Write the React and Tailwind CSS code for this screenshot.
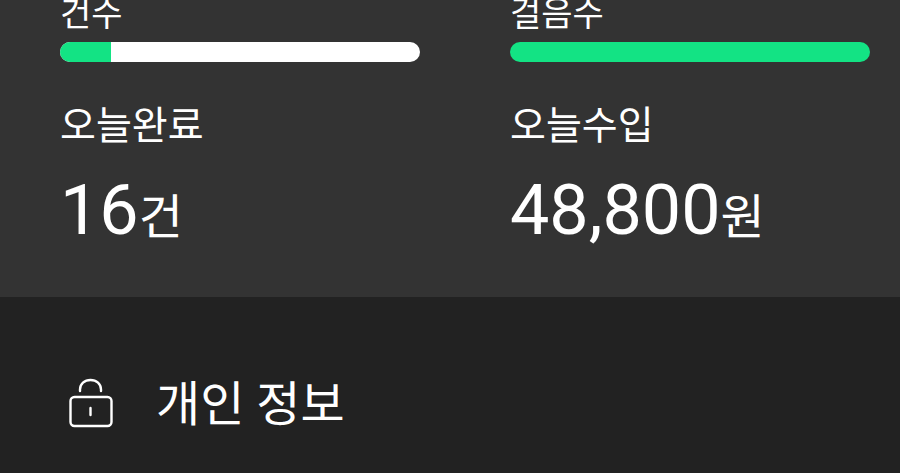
const FONT = "font-['Roboto','Noto_Sans_CJK_KR',sans-serif]";

const LockIcon = () => (
  <svg width="44" height="50" viewBox="0 0 44 50" fill="none" stroke="white" strokeWidth="2.4" strokeLinecap="round" className="shrink-0">
    <path d="M11 13 V11.5 C11 6 15.5 2 21.5 2 C27.5 2 32 6 32 11.5 V13" />
    <rect x="1.5" y="19" width="41" height="29" rx="4" />
    <path d="M21.5 30 V37" />
  </svg>
);

const Stat = ({ label, progress, title, value, unit }) => (
  <div className="flex flex-col">
    <div className="text-[34px] leading-[52px] text-white">{label}</div>
    <div className="mt-[2px] h-5 w-[360px] overflow-hidden rounded-[10px] bg-white">
      <div className="h-full bg-[#13e384]" style={{ width: `${progress}%` }} />
    </div>
    <div className="mt-[38px] text-[39px] leading-[52px] text-white">{title}</div>
    <div className="mt-[20px] flex items-baseline text-white">
      <span className="text-[70px] leading-[76px]">{value}</span>
      <span className="text-[48px] leading-[76px]">{unit}</span>
    </div>
  </div>
);

export default function App() {
  return (
    <div className={`h-[473px] w-[900px] overflow-hidden bg-[#222222] ${FONT}`}>
      <div className="h-[297px] bg-[#333333]">
        <div className="grid -translate-y-[12px] grid-cols-[360px_360px] gap-[90px] pl-[60px]">
          <Stat label="건수" progress={14.2} title="오늘완료" value="16" unit="건" />
          <Stat label="걸음수" progress={100} title="오늘수입" value="48,800" unit="원" />
        </div>
      </div>
      <div className="flex items-center gap-[43px] px-[69px] pt-[76px]">
        <LockIcon />
        <span className="mt-[4px] text-[48px] leading-[56px] text-white">개인 정보</span>
      </div>
    </div>
  );
}
